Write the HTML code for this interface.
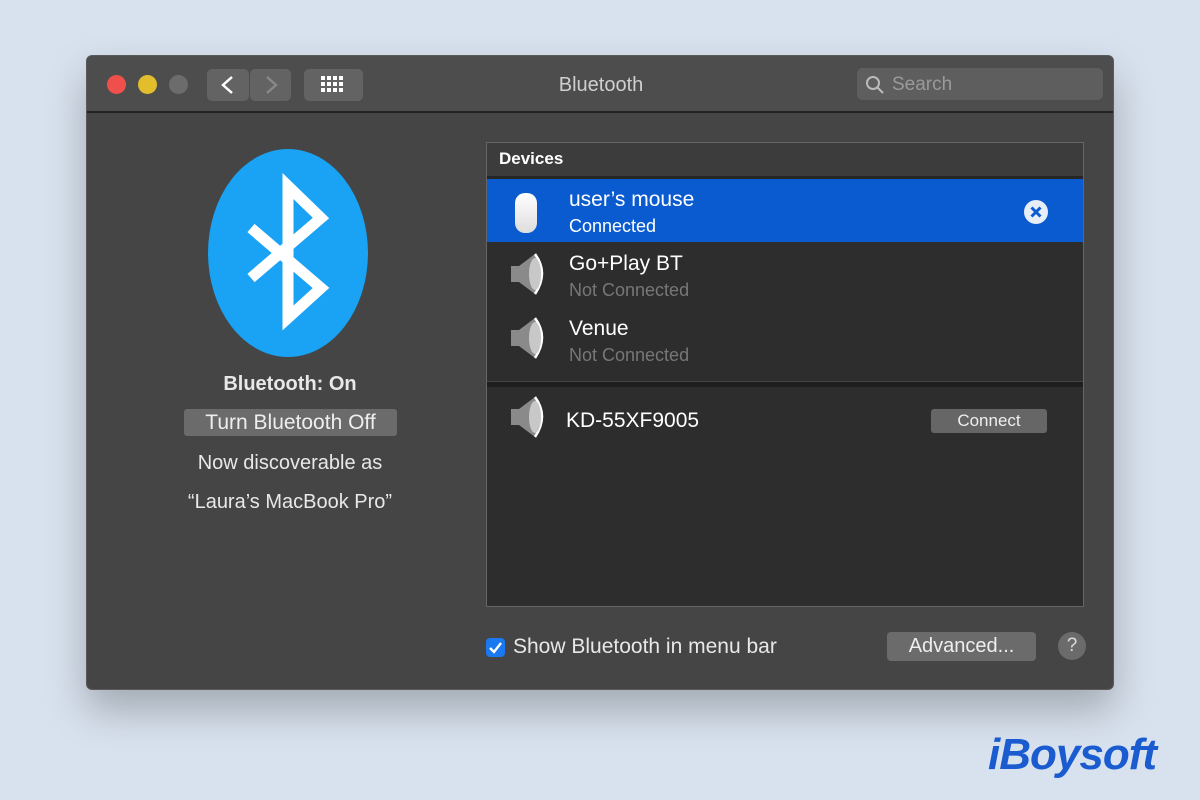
<!DOCTYPE html>
<html><head><style>
body{margin:0;width:1200px;height:800px;background:#d8e2ee;font-family:"Liberation Sans",sans-serif;position:relative;overflow:hidden}
.a{position:absolute}
.win{left:86px;top:55px;width:1028px;height:635px;background:#454545;border-radius:6px;box-shadow:0 20px 40px rgba(0,0,0,.25);border:1px solid #5a5a5a;box-sizing:border-box;overflow:hidden}
.tb{left:0;top:0;width:100%;height:55px;background:#4d4d4d;border-bottom:2px solid #222}
.btn{background:#636363;border-radius:5px}
.t{color:#fff;white-space:nowrap}
</style></head><body>
<div class="a win">
 <div class="a tb"></div>
 <div class="a" style="left:20px;top:19px;width:19px;height:19px;border-radius:50%;background:#f0504c"></div>
 <div class="a" style="left:51px;top:19px;width:19px;height:19px;border-radius:50%;background:#e2be2c"></div>
 <div class="a" style="left:82px;top:19px;width:19px;height:19px;border-radius:50%;background:#6c6c6c"></div>
 <div class="a btn" style="left:120px;top:13px;width:42px;height:32px"></div>
 <div class="a btn" style="left:163px;top:13px;width:41px;height:32px"></div>
 <svg class="a" style="left:120px;top:13px" width="84" height="32"><path d="M25 8 L16 16 L25 24" stroke="#fff" stroke-width="2.5" fill="none"/><path d="M60 8 L69 16 L60 24" stroke="#888" stroke-width="2.5" fill="none"/></svg>
 <div class="a btn" style="left:217px;top:13px;width:59px;height:32px"></div>
 <svg class="a" style="left:234px;top:20px" width="26" height="18" fill="#fff"><rect x="0" y="0" width="4" height="4"/><rect x="6" y="0" width="4" height="4"/><rect x="12" y="0" width="4" height="4"/><rect x="18" y="0" width="4" height="4"/><rect x="0" y="6" width="4" height="4"/><rect x="6" y="6" width="4" height="4"/><rect x="12" y="6" width="4" height="4"/><rect x="18" y="6" width="4" height="4"/><rect x="0" y="12" width="4" height="4"/><rect x="6" y="12" width="4" height="4"/><rect x="12" y="12" width="4" height="4"/><rect x="18" y="12" width="4" height="4"/></svg>
 <div class="a t" style="left:0;width:1028px;text-align:center;top:18px;font-size:20px;color:#cfcfcf">Bluetooth</div>
 <div class="a btn" style="left:770px;top:12px;width:246px;height:32px;background:#5e5e5e"></div>
 <svg class="a" style="left:778px;top:19px" width="20" height="20"><circle cx="8" cy="8" r="6" stroke="#bbb" stroke-width="2" fill="none"/><path d="M12.5 12.5 L18 18" stroke="#bbb" stroke-width="2"/></svg>
 <div class="a t" style="left:805px;top:18px;font-size:19px;color:#9a9a9a">Search</div>

 <svg class="a" style="left:120px;top:92px" width="162" height="210"><ellipse cx="81" cy="105" rx="80" ry="104" fill="#1aa3f4"/><path d="M44 80 L114 140 L81 170 L81 38 L114 70 L44 130" stroke="#fff" stroke-width="11" fill="none" stroke-linejoin="miter"/></svg>
 <div class="a t" style="left:0;width:406px;text-align:center;top:317px;font-size:20px;font-weight:bold;color:#e8e8e8">Bluetooth: On</div>
 <div class="a btn" style="left:97px;top:353px;width:213px;height:27px;background:#6b6b6b;border-radius:3px"></div>
 <div class="a t" style="left:97px;width:213px;text-align:center;top:355px;font-size:21px;color:#eee">Turn Bluetooth Off</div>
 <div class="a t" style="left:0;width:406px;text-align:center;top:396px;font-size:20px;color:#e8e8e8">Now discoverable as</div>
 <div class="a t" style="left:0;width:406px;text-align:center;top:435px;font-size:20px;color:#e8e8e8">“Laura’s MacBook Pro”</div>

 <div class="a" style="left:399px;top:86px;width:598px;height:465px;background:#2d2d2d;border:1px solid #666;box-sizing:border-box"></div>
 <div class="a" style="left:400px;top:87px;width:596px;height:33px;background:#3c3c3c;border-bottom:3px solid #262626"></div>
 <div class="a t" style="left:412px;top:93px;font-size:17px;font-weight:bold">Devices</div>
 <div class="a" style="left:400px;top:123px;width:596px;height:63px;background:#0b5bd0"></div>
 <div class="a" style="left:428px;top:137px;width:22px;height:40px;border-radius:10px;background:linear-gradient(#fff,#ddd)"></div>
 <div class="a t" style="left:482px;top:132px;font-size:21px">user’s mouse</div>
 <div class="a t" style="left:482px;top:160px;font-size:18px">Connected</div>
 <svg class="a" style="left:936px;top:143px" width="26" height="26"><circle cx="13" cy="13" r="12" fill="#e8eef8"/><path d="M8.5 8.5 L17.5 17.5 M17.5 8.5 L8.5 17.5" stroke="#0b5bd0" stroke-width="3"/></svg>
 <div class="a t" style="left:482px;top:196px;font-size:21px">Go+Play BT</div>
 <div class="a t" style="left:482px;top:224px;font-size:18px;color:#777">Not Connected</div>
 <div class="a t" style="left:482px;top:261px;font-size:21px">Venue</div>
 <div class="a t" style="left:482px;top:289px;font-size:18px;color:#777">Not Connected</div>
 <div class="a" style="left:400px;top:325px;width:596px;height:5px;background:#1e1e1e;border-top:1px solid #444"></div>
 <div class="a t" style="left:479px;top:353px;font-size:21px">KD-55XF9005</div>
 <div class="a" style="left:844px;top:353px;width:116px;height:24px;background:#666;border-radius:3px"></div>
 <div class="a t" style="left:844px;width:116px;text-align:center;top:355px;font-size:17px;color:#eee">Connect</div>
 <svg class="a" style="left:418px;top:195px" width="48" height="200"><g id="sp"><path d="M6 15 L14 15 L30 3 Q44 22 30 43 L14 31 L6 31 Z" fill="#8a8a8a"/><path d="M30 3 Q44 22 30 43" stroke="#fff" stroke-width="2.5" fill="none"/><ellipse cx="30" cy="23" rx="6" ry="16" fill="#c8c8c8"/></g><use href="#sp" y="64"/><use href="#sp" y="143"/></svg>

 <div class="a" style="left:399px;top:582px;width:19px;height:19px;border-radius:4px;background:#1a78f0"></div>
 <svg class="a" style="left:399px;top:582px" width="19" height="19"><path d="M4 10 L8 14 L15 5" stroke="#fff" stroke-width="2.4" fill="none"/></svg>
 <div class="a t" style="left:426px;top:579px;font-size:21px;color:#e8e8e8">Show Bluetooth in menu bar</div>
 <div class="a" style="left:800px;top:576px;width:149px;height:29px;background:#6b6b6b;border-radius:4px"></div>
 <div class="a t" style="left:800px;width:149px;text-align:center;top:579px;font-size:20px;color:#eee">Advanced...</div>
 <div class="a" style="left:971px;top:576px;width:28px;height:28px;border-radius:50%;background:#6b6b6b;color:#ddd;font-size:19px;text-align:center;line-height:28px">?</div>
</div>
<div class="a" style="left:988px;top:730px;font-size:44px;font-weight:bold;font-style:italic;color:#1a5bd0;letter-spacing:-1px">iBoysoft</div>
</body></html>
